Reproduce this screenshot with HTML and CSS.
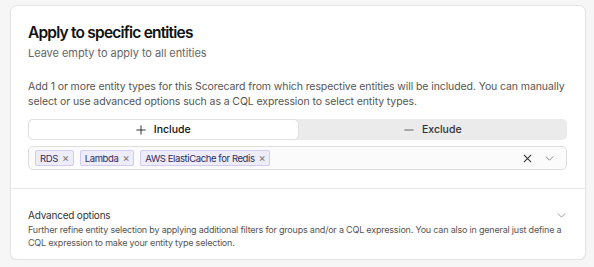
FILE: index.html
```html
<!DOCTYPE html>
<html lang="en">

<head>
    <meta charset="UTF-8">
    <meta name="viewport" content="width=device-width, initial-scale=1.0">
    <title>Apply to specific entities</title>
    <link rel="stylesheet" href="styles.css">
</head>

<body>
    <div class="card">
        <div class="card__main">
            <h2 class="card__title">Apply to specific entities</h2>
            <p class="card__subtitle">Leave empty to apply to all entities</p>
            <p class="card__text">Add 1 or more entity types for this Scorecard from which respective entities will be included. You can manually select or use advanced options such as a CQL expression to select entity types.</p>

            <div class="toggle">
                <button class="toggle__item toggle__item--active">
                    <svg width="10" height="10" viewBox="0 0 12 12" stroke="#222" stroke-width="1.1" fill="none">
                        <path d="M6 0.5v11M0.5 6h11" />
                    </svg>
                    Include
                </button>
                <button class="toggle__item">
                    <svg width="10" height="10" viewBox="0 0 12 12" stroke="#555" stroke-width="1.1" fill="none">
                        <path d="M0.5 6h11" />
                    </svg>
                    Exclude
                </button>
            </div>

            <div class="select">
                <div class="select__tags">
                    <span class="tag">RDS <span class="tag__x">&times;</span></span>
                    <span class="tag">Lambda <span class="tag__x">&times;</span></span>
                    <span class="tag">AWS ElastiCache for Redis <span class="tag__x">&times;</span></span>
                </div>
                <div class="select__icons">
                    <svg width="9" height="9" viewBox="0 0 10 10" stroke="#333" stroke-width="1.2" fill="none">
                        <path d="M1 1l8 8M9 1l-8 8" />
                    </svg>
                    <svg width="9" height="5" viewBox="0 0 10 6" stroke="#777" stroke-width="1" fill="none">
                        <path d="M0.5 0.5l4.5 4.5 4.5-4.5" />
                    </svg>
                </div>
            </div>
        </div>

        <div class="card__advanced">
            <div class="advanced__head">
                <span class="advanced__title">Advanced options</span>
                <svg width="9" height="5" viewBox="0 0 10 6" stroke="#888" stroke-width="1" fill="none">
                    <path d="M0.5 0.5l4.5 4.5 4.5-4.5" />
                </svg>
            </div>
            <p class="advanced__text">Further refine entity selection by applying additional filters for groups and/or a CQL expression. You can also in general just define a CQL expression to make your entity type selection.</p>
        </div>
    </div>
</body>

</html>
```

FILE: styles.css
```css
html,
body {
    margin: 0;
    padding: 0;
}

body {
    font-family: Inter, "Noto Sans", sans-serif;
    background: #f6f6f6;
    color: #222;
    padding: 5px 8px 0 10px;
}

.card {
    background: #fff;
    border: 1px solid #e4e4e4;
    border-radius: 7px;
    box-shadow: 0 1px 2px rgb(0 0 0 / 6%);
}

.card__main {
    padding: 17px 18px 18px 17px;
    border-bottom: 1px solid #e8e8e8;
}

.card__title {
    margin: 0;
    font-size: 15.5px;
    font-weight: 600;
    letter-spacing: -0.8px;
    line-height: 20px;
    color: #111;
}

.card__subtitle {
    margin: 3px 0 0;
    font-size: 11px;
    letter-spacing: -0.05px;
    color: #666;
    line-height: 14px;
}

.card__text {
    margin: 19px 0 0;
    font-size: 10.5px;
    letter-spacing: -0.1px;
    color: #555;
    line-height: 15px;
}

.toggle {
    display: flex;
    margin-top: 10px;
    background: #ebebeb;
    border-radius: 5px;
    height: 21px;
}

.toggle__item {
    flex: 1;
    display: flex;
    align-items: center;
    justify-content: center;
    gap: 8px;
    border: 0;
    background: transparent;
    font-family: inherit;
    font-size: 10.5px;
    font-weight: 500;
    color: #333;
    padding: 0;
}

.toggle__item--active {
    background: #fff;
    border: 1px solid #e0e0e0;
    border-radius: 5px;
    color: #111;
}

.select {
    display: flex;
    align-items: center;
    justify-content: space-between;
    margin-top: 6px;
    height: 22px;
    border: 1px solid #dedede;
    border-radius: 5px;
    background: #fbfbfb;
    padding: 0 12px 0 6px;
}

.select__tags {
    display: flex;
    gap: 6px;
}

.tag {
    display: inline-flex;
    align-items: center;
    gap: 4px;
    height: 14px;
    padding: 0 4px;
    background: #efecf9;
    border: 1px solid #d3cced;
    border-radius: 2px;
    font-size: 9.5px;
    letter-spacing: -0.4px;
    color: #2d2b5c;
}

.tag__x {
    color: #777;
    font-size: 11px;
}

.select__icons {
    display: flex;
    align-items: center;
    gap: 13px;
}

.card__advanced {
    padding: 20px 19px 10px 17px;
}

.advanced__head {
    display: flex;
    align-items: center;
    justify-content: space-between;
    font-size: 10px;
    letter-spacing: -0.2px;
    color: #333;
}

.advanced__text {
    margin: 2px 0 0;
    font-size: 9px;
    letter-spacing: -0.2px;
    color: #555;
    line-height: 13px;
}
```
